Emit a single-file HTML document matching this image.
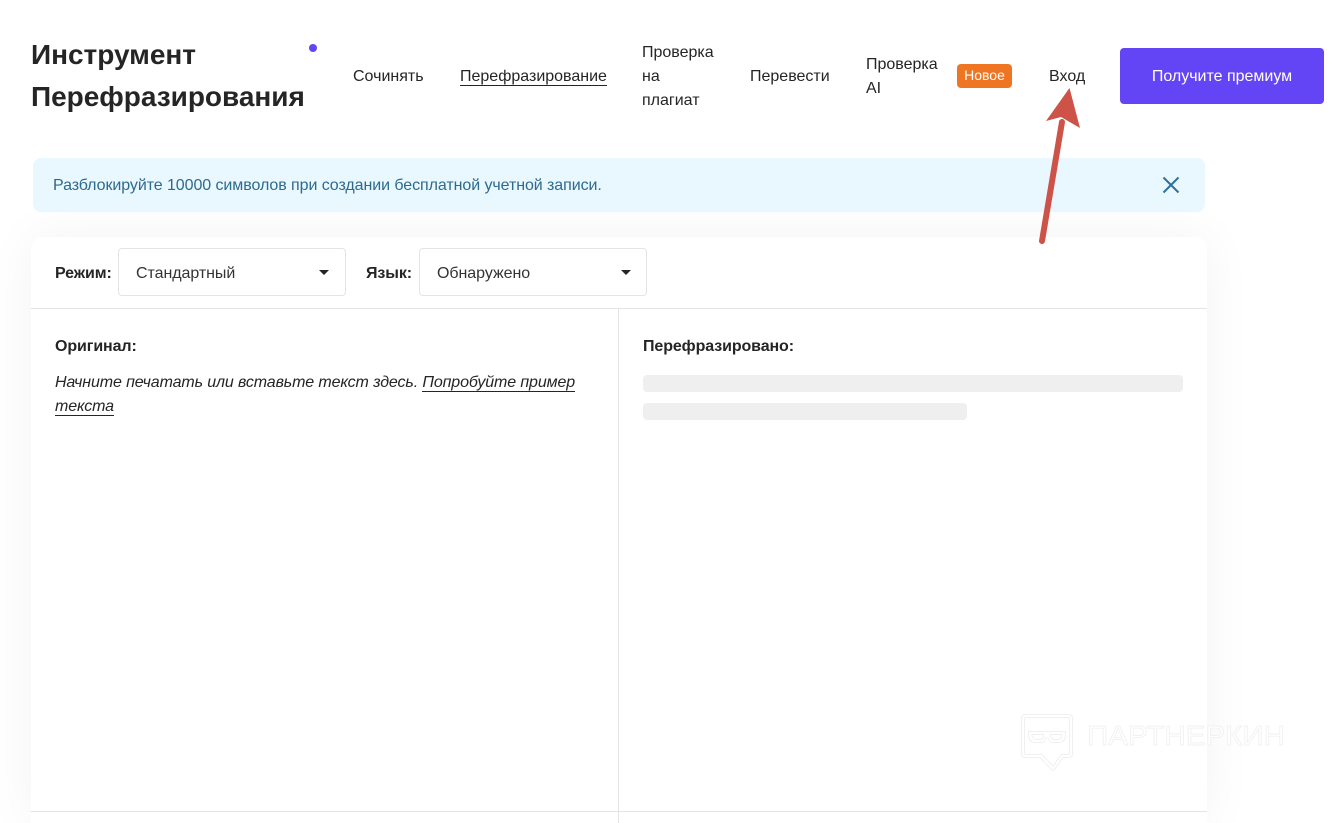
<!DOCTYPE html>
<html lang="ru">
<head>
<meta charset="utf-8">
<title>Инструмент Перефразирования</title>
<style>
html,body{margin:0;padding:0;background:#fff;width:1336px;height:823px;overflow:hidden}
body{font-family:"Liberation Sans","Noto Sans CJK SC",sans-serif;color:#252525;font-size:16px}
#w{position:relative;width:1336px;height:823px;overflow:hidden}
.a{position:absolute;white-space:nowrap}
.t{font-weight:700;font-size:28px;line-height:42px;color:#252525}
.n{line-height:24px;font-size:16px;color:#252525}
.u{border-bottom:1px solid #252525}
.card{position:absolute;left:31px;top:237px;width:1176px;height:586px;background:#fff;border-radius:12px 12px 0 0;box-shadow:0 0 50px rgba(0,0,0,.05)}
.sel{position:absolute;top:248px;height:46px;border:1px solid #e4e4e4;border-radius:4px;background:#fff;line-height:46px;font-size:16px;color:#333}
.sel span{position:absolute;left:17px;top:2px;letter-spacing:-.05px}
.sel i{position:absolute;top:21px;width:0;height:0;border-left:5.5px solid transparent;border-right:5.5px solid transparent;border-top:5.5px solid #252525}
.b{font-weight:700;font-size:16px;color:#252525;letter-spacing:-.1px}
.sk{position:absolute;height:17px;background:#efefef;border-radius:4px;left:643px}
</style>
</head>
<body>
<div id="w">
<div class="a t" style="left:31px;top:34px;letter-spacing:-.02px">Инструмент<br>Перефразирования</div>
<div class="a" style="left:309px;top:44px;width:8px;height:8px;border-radius:50%;background:#6445f5"></div>

<div class="a n" style="left:353px;top:65px">Сочинять</div>
<div class="a n" style="left:460px;top:65px"><span class="u">Перефразирование</span></div>
<div class="a n" style="left:642px;top:41px">Проверка<br>на<br>плагиат</div>
<div class="a n" style="left:750px;top:65px">Перевести</div>
<div class="a n" style="left:866px;top:53px">Проверка<br>AI</div>
<div class="a" style="left:957px;top:64px;width:55px;height:24px;background:#f07522;border-radius:4px;color:#fff;font-size:14px;line-height:23px;text-align:center">Новое</div>
<div class="a n" style="left:1049px;top:65px">Вход</div>
<div class="a" style="left:1120px;top:48px;width:204px;height:56px;background:#6445f5;border-radius:4px;color:#fff;font-size:16px;line-height:58px;text-align:center">Получите премиум</div>

<div class="card"></div>
<div class="a" style="left:33px;top:158px;width:1172px;height:54px;background:#e9f7fe;border-radius:8px"></div>
<div class="a" style="left:53px;top:174px;line-height:24px;font-size:16px;letter-spacing:-.07px;color:#2d6a8e">Разблокируйте 10000 символов при создании бесплатной учетной записи.</div>
<svg class="a" style="left:1160px;top:174px" width="22" height="22" viewBox="0 0 22 22"><path d="M3.500 3.500L18.500 18.500M18.500 3.500L3.500 18.500" stroke="#2f7198" stroke-width="2" fill="none"/></svg>

<div class="a b" style="left:55px;top:265px">Режим:</div>
<div class="sel" style="left:118px;width:226px"><span>Стандартный</span><i style="left:200px"></i></div>
<div class="a b" style="left:366px;top:265px">Язык:</div>
<div class="sel" style="left:419px;width:226px"><span>Обнаружено</span><i style="left:201px"></i></div>

<div class="a" style="left:31px;top:308px;width:1176px;height:1px;background:#e4e4e4"></div>
<div class="a" style="left:618px;top:309px;width:1px;height:514px;background:#e4e4e4"></div>
<div class="a" style="left:31px;top:811px;width:1176px;height:1px;background:#e4e4e4"></div>

<div class="a b" style="left:55px;top:338px">Оригинал:</div>
<div class="a" style="left:55px;top:371px;line-height:24px;font-style:italic;font-size:16px;letter-spacing:-.12px;color:#252525">Начните печатать или вставьте текст здесь. <span class="u">Попробуйте пример</span><br><span class="u">текста</span></div>

<div class="a b" style="left:643px;top:338px">Перефразировано:</div>
<div class="sk" style="top:375px;width:540px"></div>
<div class="sk" style="top:403px;width:324px"></div>

<svg class="a" style="left:1015px;top:708px" width="280" height="68" viewBox="0 0 280 68">
<g fill="none" stroke="#f0f0f0" stroke-width="1">
<path d="M10 6.500H54Q57.500 6.500 57.500 10V46Q57.500 49.500 54 49.500H48L39.500 61.500Q38 63 36.500 61.500L25 49.500H10Q6.500 49.500 6.500 46V10Q6.500 6.500 10 6.500Z"/>
<path d="M11 9.500H53Q54.500 9.500 54.500 11V45Q54.500 46.500 53 46.500H46.500L38 58L27 46.500H11Q9.500 46.500 9.500 45V11Q9.500 9.500 11 9.500Z"/>
<path d="M13.500 23.500H50.500V27Q50.500 34.500 43 34.500H38Q34 34.500 33.500 30H30.500Q30 34.500 26 34.500H21Q13.500 34.500 13.500 27Z"/>
<path d="M17 26.500H29Q28 31.500 25 31.500H21Q17 31.500 17 26.500ZM35 26.500H47Q47 31.500 43 31.500H39Q36 31.500 35 26.500Z"/>
</g>
<text x="72" y="37" font-family="Liberation Sans,sans-serif" font-size="28" textLength="198" lengthAdjust="spacingAndGlyphs" fill="#fff" stroke="#eeeeee" stroke-width=".7">ПАРТНЕРКИН</text>
</svg>

<svg class="a" style="left:1030px;top:80px" width="60" height="170" viewBox="0 0 60 170">
<path d="M12 161L32 42" stroke="#cd5349" stroke-width="6" stroke-linecap="round" fill="none"/>
<path d="M39.500 8L16 41L31 37L50 48Z" fill="#cd5349"/>
</svg>
</div>
</body>
</html>
